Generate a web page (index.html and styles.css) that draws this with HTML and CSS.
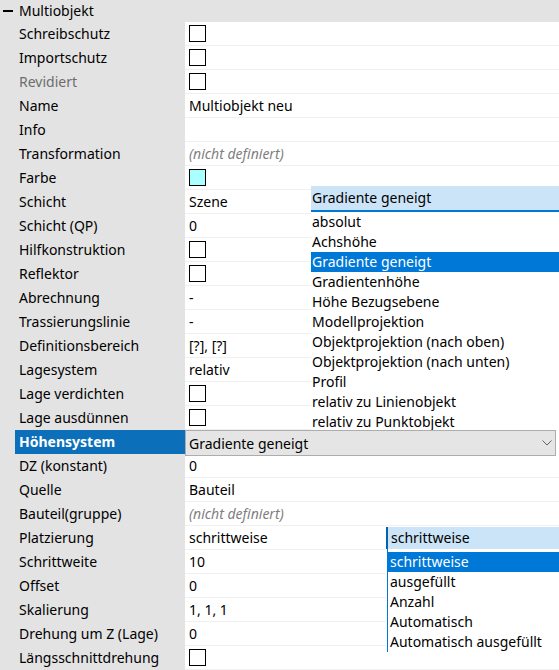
FILE: index.html
```html
<!DOCTYPE html>
<html>
<head>
<meta charset="utf-8">
<link rel="stylesheet" href="styles.css">
</head>
<body>
<div class="grid">
  <div class="cat"><span class="minus"></span><span class="cat-name">Multiobjekt</span></div>
  <div class="rows">
    <div class="row"><div class="lab">Schreibschutz</div><div class="val"><span class="cb"></span></div></div>
    <div class="row"><div class="lab">Importschutz</div><div class="val"><span class="cb"></span></div></div>
    <div class="row"><div class="lab dim">Revidiert</div><div class="val"><span class="cb"></span></div></div>
    <div class="row"><div class="lab">Name</div><div class="val">Multiobjekt neu</div></div>
    <div class="row"><div class="lab">Info</div><div class="val"></div></div>
    <div class="row"><div class="lab">Transformation</div><div class="val undef">(nicht definiert)</div></div>
    <div class="row"><div class="lab">Farbe</div><div class="val"><span class="cb swatch"></span></div></div>
    <div class="row"><div class="lab">Schicht</div><div class="val">Szene</div></div>
    <div class="row"><div class="lab">Schicht (QP)</div><div class="val">0</div></div>
    <div class="row"><div class="lab">Hilfkonstruktion</div><div class="val"><span class="cb"></span></div></div>
    <div class="row"><div class="lab">Reflektor</div><div class="val"><span class="cb"></span></div></div>
    <div class="row"><div class="lab">Abrechnung</div><div class="val">-</div></div>
    <div class="row"><div class="lab">Trassierungslinie</div><div class="val">-</div></div>
    <div class="row"><div class="lab">Definitionsbereich</div><div class="val">[?], [?]</div></div>
    <div class="row"><div class="lab">Lagesystem</div><div class="val">relativ</div></div>
    <div class="row"><div class="lab">Lage verdichten</div><div class="val"><span class="cb"></span></div></div>
    <div class="row"><div class="lab">Lage ausdünnen</div><div class="val"><span class="cb"></span></div></div>
    <div class="row sel"><div class="lab">Höhensystem</div><div class="val">
      <div class="combo"><span>Gradiente geneigt</span>
        <svg class="chev" width="10" height="6" viewBox="0 0 10 6"><path d="M0.5 0.5 L5 5 L9.5 0.5" fill="none" stroke="#606060" stroke-width="1"/></svg>
      </div>
    </div></div>
    <div class="row"><div class="lab">DZ (konstant)</div><div class="val">0</div></div>
    <div class="row"><div class="lab">Quelle</div><div class="val">Bauteil</div></div>
    <div class="row"><div class="lab">Bauteil(gruppe)</div><div class="val undef">(nicht definiert)</div></div>
    <div class="row"><div class="lab">Platzierung</div><div class="val">schrittweise</div></div>
    <div class="row"><div class="lab">Schrittweite</div><div class="val">10</div></div>
    <div class="row"><div class="lab">Offset</div><div class="val">0</div></div>
    <div class="row"><div class="lab">Skalierung</div><div class="val">1, 1, 1</div></div>
    <div class="row"><div class="lab">Drehung um Z (Lage)</div><div class="val">0</div></div>
    <div class="row"><div class="lab">Längsschnittdrehung</div><div class="val"><span class="cb"></span></div></div>
  </div>

  <div class="drop drop1">
    <div class="drop-head">Gradiente geneigt</div>
    <div class="drop-list">
      <div class="item">absolut</div>
      <div class="item">Achshöhe</div>
      <div class="item hi">Gradiente geneigt</div>
      <div class="item">Gradientenhöhe</div>
      <div class="item">Höhe Bezugsebene</div>
      <div class="item">Modellprojektion</div>
      <div class="item">Objektprojektion (nach oben)</div>
      <div class="item">Objektprojektion (nach unten)</div>
      <div class="item">Profil</div>
      <div class="item">relativ zu Linienobjekt</div>
      <div class="item">relativ zu Punktobjekt</div>
    </div>
  </div>

  <div class="drop drop2">
    <div class="drop-head">schrittweise</div>
    <div class="drop-list">
      <div class="item hi">schrittweise</div>
      <div class="item">ausgefüllt</div>
      <div class="item">Anzahl</div>
      <div class="item">Automatisch</div>
      <div class="item">Automatisch ausgefüllt</div>
    </div>
  </div>
</div>
</body>
</html>
```

FILE: styles.css
```css
html, body {
  margin: 0;
  padding: 0;
  background: #ffffff;
}
.grid {
  position: relative;
  width: 559px;
  height: 670px;
  overflow: hidden;
  background: #e3e3e3;
  font-family: "Noto Sans", "Open Sans", sans-serif;
  font-size: 14px;
  color: #000;
}
.cat {
  height: 22px;
  display: flex;
  align-items: center;
  background: #e3e3e3;
}
.minus {
  display: block;
  width: 10px;
  height: 2px;
  background: #000;
  margin-left: 3px;
  margin-right: 6px;
}
.cat-name {
  line-height: 22px;
}
.rows {
  padding-left: 15px;
}
.row {
  display: flex;
  height: 24px;
}
.lab {
  width: 170px;
  box-sizing: border-box;
  padding-left: 4px;
  line-height: 24px;
  white-space: nowrap;
}
.lab.dim {
  color: #6d6d6d;
}
.val {
  flex: 1;
  background: #fff;
  box-sizing: border-box;
  border-bottom: 1px solid #f0f0f0;
  padding-left: 4px;
  line-height: 23px;
  display: flex;
  align-items: center;
  white-space: nowrap;
}
.val.undef {
  color: #808080;
  font-style: italic;
}
.cb {
  display: block;
  width: 17px;
  height: 17px;
  box-sizing: border-box;
  border: 1px solid #000;
  background: #fff;
}
.cb.swatch {
  background: #aaffff;
}
.row.sel .lab {
  background: #0c6fba;
  color: #fff;
  font-weight: bold;
}
.row.sel .val {
  padding-left: 0;
  border-bottom: none;
  align-items: flex-start;
}
.combo {
  position: relative;
  z-index: 2;
  width: 371px;
  height: 26px;
  box-sizing: border-box;
  background: #e5e5e5;
  border: 1px solid #adadad;
  display: flex;
  align-items: center;
  justify-content: space-between;
  padding-left: 3px;
  padding-right: 3px;
}
.chev {
  display: block;
}
.drop {
  position: absolute;
  z-index: 1;
  background: #fff;
  overflow: hidden;
}
.drop1 {
  left: 311px;
  top: 186px;
  width: 248px;
  height: 244px;
}
.drop2 {
  left: 386px;
  top: 527px;
  width: 173px;
  height: 125px;
}
.drop-head {
  background: #cce4f7;
  padding-left: 1px;
  white-space: nowrap;
}
.drop1 .drop-head {
  height: 24px;
  line-height: 24px;
  border-bottom: 2px solid #0078d7;
}
.drop2 .drop-head {
  height: 22px;
  line-height: 22px;
  border-left: 2px solid #0063b1;
  padding-left: 3px;
}
.drop2 .drop-list {
  margin-left: 1px;
  border-left: 1px solid #0078d7;
  padding-top: 3px;
}
.item {
  height: 20px;
  line-height: 20px;
  padding-left: 1px;
  white-space: nowrap;
}
.drop2 .item {
  padding-left: 2px;
}
.item.hi {
  background: #0078d7;
  color: #fff;
}
```
